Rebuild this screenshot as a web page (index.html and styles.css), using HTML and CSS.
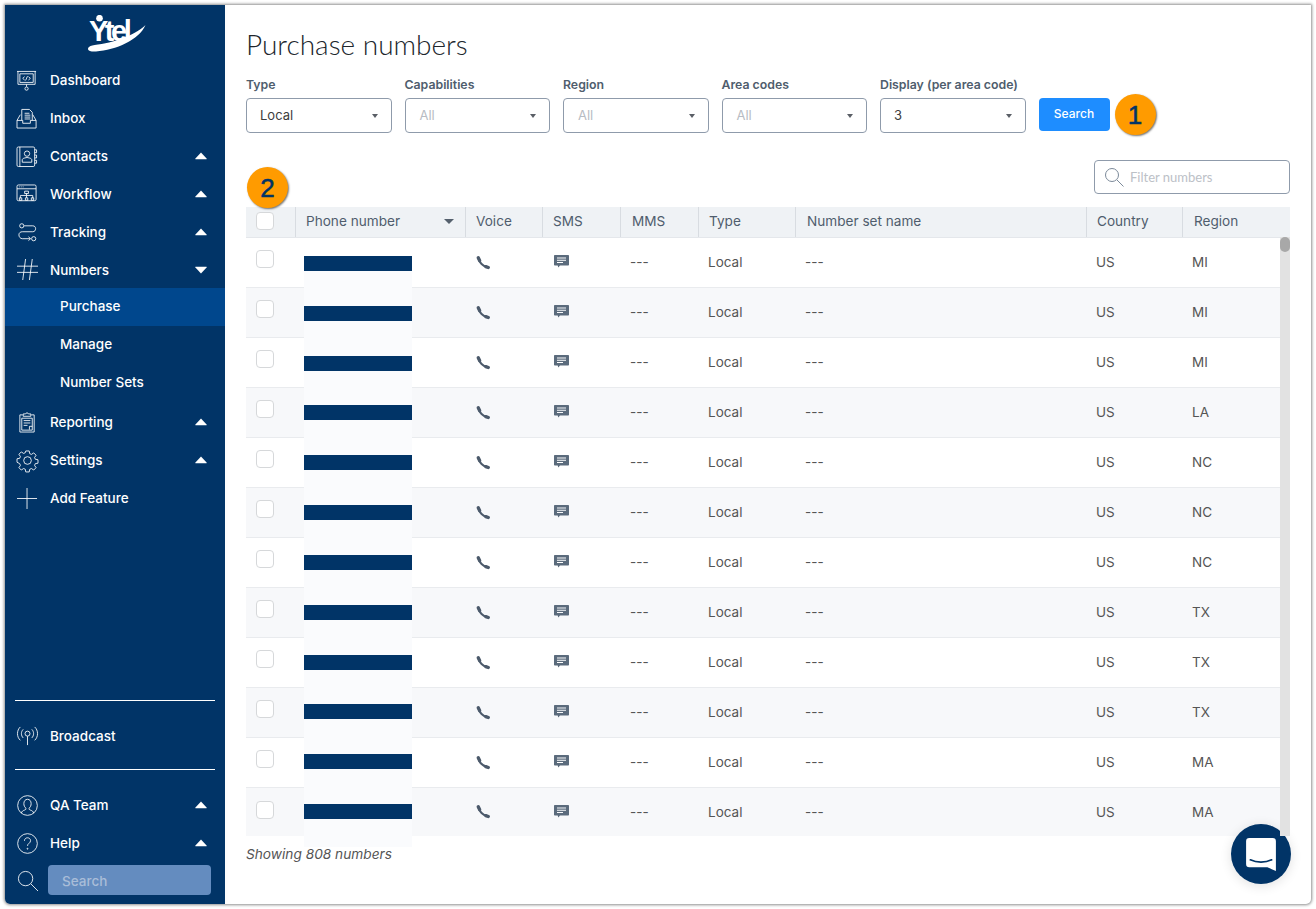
FILE: index.html
```html
<!DOCTYPE html>
<html lang="en">
<head>
<meta charset="utf-8">
<title>Purchase numbers</title>
<link rel="stylesheet" href="styles.css">
</head>
<body>
<svg class="defs" width="0" height="0" aria-hidden="true">
  <symbol id="up" viewBox="0 0 12 8"><path d="M6 .6 11.6 6.4c.3.4.1.8-.4.8H.8c-.5 0-.7-.4-.4-.8z"/></symbol>
  <symbol id="phone" viewBox="0 0 14 14"><path d="M2.600 3C3.500 6.500 7 10 11 11" fill="none" stroke="#4c5a6b" stroke-width="2.300"/><path d="M2.300 1.800 3.600 4.500M9.800 10.600l2.500.9" fill="none" stroke="#4c5a6b" stroke-width="3.300" stroke-linecap="round"/></symbol>
  <symbol id="sms" viewBox="0 0 15 13"><path fill-rule="evenodd" d="M.8 0h13.400a.8.8 0 0 1 .8.8V9.700a.8.800 0 0 1-.8.8H6l-1.700 2-.6-2H.8a.8.800 0 0 1-.8-.8V.8A.8.800 0 0 1 .8 0zM3 2.500v.9h9v-.9zm0 2.300v.9h9v-.9zm0 2.300V8h6V7.100z"/></symbol>
</svg>
<div class="window">
  <nav class="sidebar">
    <div class="logo">
      <span class="logo-text">Ytel</span>
      <svg class="logo-swoosh" width="60" height="38" viewBox="0 0 60 38"><circle cx="11.500" cy="3.200" r="3.300" fill="#fff"/><path d="M1 32C-2 35 2 37 8 36.500 28 35 51 25 57.500 10 50 18 30 27 10 29.500 5 30.300 3 30.500 1 32z" fill="#fff"/></svg>
    </div>
    <a class="nav-item"><svg class="ico" viewBox="1 0 22 22"><path d="M1 1.500h20M2 1.500v13.500h18V1.500M11 15v2.500"/><circle cx="11" cy="19.500" r="1.700"/><path d="M4 4h14v9H4zM9 7 7 8.800l2 1.700M13 7l2 1.800-2 1.700M12 6.500l-2 4.500"/></svg><span>Dashboard</span></a>
    <a class="nav-item"><svg class="ico" viewBox="1 0 22 22"><path d="M1 13v8h20v-8l-3.500-6M1 13l3.500-6M1 13h6v3h8v-3h6"/><path d="M6 13V1.500h8l3 3V13M9 5.500h5M9 7.500h6M9 9.500h6M9 11.500h6"/></svg><span>Inbox</span></a>
    <a class="nav-item"><svg class="ico" viewBox="1 0 22 22"><rect x="1" y="1" width="18.500" height="20.500" rx="1.500"/><path d="M4 1v20.500M19.500 4h2v3h-2M19.500 9.500h2v3h-2M19.500 15h2v3h-2"/><circle cx="11.500" cy="8" r="2.800"/><path d="M6.500 17v-2.500c0-1 1-1.500 2-1.800l3-.7 3 .7c1 .3 2 .8 2 1.800V17z"/></svg><span>Contacts</span><svg class="caret"><use href="#up"/></svg></a>
    <a class="nav-item"><svg class="ico" viewBox="1 0 22 22"><rect x="1" y="1" width="20" height="16.500" rx="1.500"/><path d="M1 5h20M3 3h.8M5 3h.8M7 3h.8M9 7.500h4v2.500H9zM11 10v2M4.500 15v-3h13v3M3.500 14.500h2.500v2.500H3.500zM9.800 14.500h2.500v2.500H9.800zM16 14.500h2.500v2.500H16zM11 12v2.500"/></svg><span>Workflow</span><svg class="caret"><use href="#up"/></svg></a>
    <a class="nav-item"><svg class="ico" viewBox="0 0 22 22"><circle cx="5" cy="4" r="2.200"/><circle cx="17.500" cy="17.500" r="2.200"/><path d="M7.500 4h9c2 0 3 1.400 3 3s-1 3.200-3 3.200H5.500c-2 0-3.500 1.300-3.500 3.300s1.500 4 3.500 4H14M12 15.500l2.200 2-2.200 2"/></svg><span>Tracking</span><svg class="caret"><use href="#up"/></svg></a>
    <a class="nav-item nav-open"><svg class="ico" viewBox="0 0 22 22"><path d="M0 7.500h22M0 14h22M9 0 6 22M16 0l-3 22"/></svg><span>Numbers</span><svg class="caret caret-down"><use href="#up"/></svg></a>
    <div class="submenu">
      <a class="sub-item sub-active">Purchase</a>
      <a class="sub-item">Manage</a>
      <a class="sub-item">Number Sets</a>
    </div>
    <a class="nav-item"><svg class="ico" viewBox="0 0 22 22"><path d="M6 3H3v18h15V3h-3"/><path d="M6.500 4.500V2h2.500c0-1.400 3-1.400 3 0h2.500v2.500zM5 6.500h11v12.500H5zM7 9h7M7 11.500h7M7 14h4M13 18.500V15h3"/></svg><span>Reporting</span><svg class="caret"><use href="#up"/></svg></a>
    <a class="nav-item"><svg class="ico" viewBox="0 0 22 22"><circle cx="11" cy="11" r="4"/><path d="M9.200 1h3.600l.5 2.800 1.800.8 2.400-1.600 2.500 2.500-1.600 2.400.8 1.800 2.800.5v3.600l-2.800.5-.8 1.800 1.600 2.400-2.500 2.500-2.400-1.600-1.800.8-.5 2.800H9.200l-.5-2.800-1.800-.8-2.400 1.600-2.500-2.500 1.600-2.400-.8-1.800L0 12.800V9.200l2.800-.5.800-1.800L2 4.500 4.500 2l2.400 1.600 1.800-.8z"/></svg><span>Settings</span><svg class="caret"><use href="#up"/></svg></a>
    <a class="nav-item"><svg class="ico" viewBox="0 0 22 22"><path d="M0 11h21M10.500 0v22"/></svg><span>Add Feature</span></a>

    <div class="side-bottom">
      <div class="side-rule"></div>
      <a class="nav-item nav-broadcast"><svg class="ico" viewBox="0 0 22 22"><circle cx="11" cy="8" r="2.600"/><path d="M11 10.600V20M6.500 3.500c-2.500 2.500-2.500 6.500 0 9M15.500 3.500c2.500 2.500 2.500 6.500 0 9M3.500 1c-4 3.500-4 10.500 0 14M18.500 1c4 3.500 4 10.500 0 14"/></svg><span>Broadcast</span></a>
      <div class="side-rule"></div>
      <a class="nav-item nav-team"><svg class="ico" viewBox="0 0 22 22"><circle cx="11" cy="11" r="10.300"/><path d="M4.500 19c.5-2 2-2.700 3.500-3.200 1-.4 1.500-.8 1.500-1.800-1.500-1-2.300-3-2.300-5 0-2.700 1.500-4.500 3.800-4.500s3.800 1.800 3.800 4.500c0 2-.8 4-2.300 5 0 1 .5 1.400 1.500 1.800 1.500.5 3 1.200 3.500 3.200"/></svg><span>QA Team</span><svg class="caret"><use href="#up"/></svg></a>
      <a class="nav-item"><svg class="ico" viewBox="0 0 22 22"><circle cx="11" cy="11" r="10.300"/><path d="M7.800 8.200c0-2 1.500-3.200 3.200-3.200s3.200 1.200 3.200 3c0 2.800-3.200 2.800-3.200 5.500"/><circle cx="11" cy="16.500" r=".5"/></svg><span>Help</span><svg class="caret"><use href="#up"/></svg></a>
      <div class="side-search">
        <svg class="ico" viewBox="0 0 22 22"><circle cx="9" cy="9" r="7.500"/><path d="m14.500 14.500 7.500 7.500"/></svg>
        <div class="side-search-box">Search</div>
      </div>
    </div>
  </nav>

  <main class="content">
    <h1 class="title">Purchase numbers</h1>
    <form class="filters">
      <div class="field"><label>Type</label><div class="select"><span>Local</span><i class="sel-caret"></i></div></div>
      <div class="field"><label>Capabilities</label><div class="select muted"><span>All</span><i class="sel-caret"></i></div></div>
      <div class="field"><label>Region</label><div class="select muted"><span>All</span><i class="sel-caret"></i></div></div>
      <div class="field"><label>Area codes</label><div class="select muted"><span>All</span><i class="sel-caret"></i></div></div>
      <div class="field"><label>Display (per area code)</label><div class="select"><span>3</span><i class="sel-caret"></i></div></div>
      <button class="search-btn" type="button">Search</button>
      <span class="badge">1</span>
    </form>

    <div class="filter-row">
      <div class="filter-box">
        <svg width="22" height="22" viewBox="0 0 22 22" fill="none" stroke="#7c8a9a"><circle cx="9" cy="9" r="6.500"/><path d="m14 14 6.500 6.500"/></svg>
        <span>Filter numbers</span>
      </div>
    </div>

    <div class="table-wrap">
      <span class="badge badge-two">2</span>
      <div class="row head">
        <div class="cell"><i class="check"></i></div>
        <div class="cell">Phone number<i class="sort-caret"></i></div>
        <div class="cell">Voice</div>
        <div class="cell">SMS</div>
        <div class="cell">MMS</div>
        <div class="cell">Type</div>
        <div class="cell">Number set name</div>
        <div class="cell">Country</div>
        <div class="cell">Region</div>
      </div>
      <div class="row"><div class="cell"><i class="check"></i></div><div class="cell"></div><div class="cell"><svg class="ph"><use href="#phone"/></svg></div><div class="cell"><svg class="msg"><use href="#sms"/></svg></div><div class="cell">---</div><div class="cell">Local</div><div class="cell">---</div><div class="cell">US</div><div class="cell">MI</div></div>
      <div class="row"><div class="cell"><i class="check"></i></div><div class="cell"></div><div class="cell"><svg class="ph"><use href="#phone"/></svg></div><div class="cell"><svg class="msg"><use href="#sms"/></svg></div><div class="cell">---</div><div class="cell">Local</div><div class="cell">---</div><div class="cell">US</div><div class="cell">MI</div></div>
      <div class="row"><div class="cell"><i class="check"></i></div><div class="cell"></div><div class="cell"><svg class="ph"><use href="#phone"/></svg></div><div class="cell"><svg class="msg"><use href="#sms"/></svg></div><div class="cell">---</div><div class="cell">Local</div><div class="cell">---</div><div class="cell">US</div><div class="cell">MI</div></div>
      <div class="row"><div class="cell"><i class="check"></i></div><div class="cell"></div><div class="cell"><svg class="ph"><use href="#phone"/></svg></div><div class="cell"><svg class="msg"><use href="#sms"/></svg></div><div class="cell">---</div><div class="cell">Local</div><div class="cell">---</div><div class="cell">US</div><div class="cell">LA</div></div>
      <div class="row"><div class="cell"><i class="check"></i></div><div class="cell"></div><div class="cell"><svg class="ph"><use href="#phone"/></svg></div><div class="cell"><svg class="msg"><use href="#sms"/></svg></div><div class="cell">---</div><div class="cell">Local</div><div class="cell">---</div><div class="cell">US</div><div class="cell">NC</div></div>
      <div class="row"><div class="cell"><i class="check"></i></div><div class="cell"></div><div class="cell"><svg class="ph"><use href="#phone"/></svg></div><div class="cell"><svg class="msg"><use href="#sms"/></svg></div><div class="cell">---</div><div class="cell">Local</div><div class="cell">---</div><div class="cell">US</div><div class="cell">NC</div></div>
      <div class="row"><div class="cell"><i class="check"></i></div><div class="cell"></div><div class="cell"><svg class="ph"><use href="#phone"/></svg></div><div class="cell"><svg class="msg"><use href="#sms"/></svg></div><div class="cell">---</div><div class="cell">Local</div><div class="cell">---</div><div class="cell">US</div><div class="cell">NC</div></div>
      <div class="row"><div class="cell"><i class="check"></i></div><div class="cell"></div><div class="cell"><svg class="ph"><use href="#phone"/></svg></div><div class="cell"><svg class="msg"><use href="#sms"/></svg></div><div class="cell">---</div><div class="cell">Local</div><div class="cell">---</div><div class="cell">US</div><div class="cell">TX</div></div>
      <div class="row"><div class="cell"><i class="check"></i></div><div class="cell"></div><div class="cell"><svg class="ph"><use href="#phone"/></svg></div><div class="cell"><svg class="msg"><use href="#sms"/></svg></div><div class="cell">---</div><div class="cell">Local</div><div class="cell">---</div><div class="cell">US</div><div class="cell">TX</div></div>
      <div class="row"><div class="cell"><i class="check"></i></div><div class="cell"></div><div class="cell"><svg class="ph"><use href="#phone"/></svg></div><div class="cell"><svg class="msg"><use href="#sms"/></svg></div><div class="cell">---</div><div class="cell">Local</div><div class="cell">---</div><div class="cell">US</div><div class="cell">TX</div></div>
      <div class="row"><div class="cell"><i class="check"></i></div><div class="cell"></div><div class="cell"><svg class="ph"><use href="#phone"/></svg></div><div class="cell"><svg class="msg"><use href="#sms"/></svg></div><div class="cell">---</div><div class="cell">Local</div><div class="cell">---</div><div class="cell">US</div><div class="cell">MA</div></div>
      <div class="row row-last"><div class="cell"><i class="check"></i></div><div class="cell"></div><div class="cell"><svg class="ph"><use href="#phone"/></svg></div><div class="cell"><svg class="msg"><use href="#sms"/></svg></div><div class="cell">---</div><div class="cell">Local</div><div class="cell">---</div><div class="cell">US</div><div class="cell">MA</div></div>

      <div class="redact">
        <i></i><i></i><i></i><i></i><i></i><i></i><i></i><i></i><i></i><i></i><i></i><i></i>
      </div>
      <div class="scroll-track"><div class="scroll-thumb"></div></div>
    </div>
    <p class="showing">Showing 808 numbers</p>
  </main>

  <div class="chat">
    <svg width="30" height="33" viewBox="0 0 28 31"><path d="M3 0h22a3 3 0 0 1 3 3v28l-8-3.500H3a3 3 0 0 1-3-3V3a3 3 0 0 1 3-3z" fill="#fff"/><path d="M4 20.500c6 3 14 3 20 0" fill="none" stroke="#013467" stroke-width="1.600" stroke-linecap="round"/></svg>
  </div>
</div>
</body>
</html>
```
FILE: styles.css
```css
* { box-sizing: border-box; }
html, body { margin: 0; height: 100%; background: #fff; overflow: hidden; }
body { padding: 5px; font-family: Inter, "Liberation Sans", sans-serif; font-size: 14px; }
.defs { position: absolute; }

.window {
  position: relative;
  display: flex;
  width: 1306px;
  height: 899px;
  border-radius: 0 0 5px 5px;
  box-shadow: 0 0 3px 1px rgba(0, 0, 0, .45);
  background: #fff;
  overflow: hidden;
}

/* Sidebar */
.sidebar {
  flex: 0 0 220px;
  display: flex;
  flex-direction: column;
  background: #013467;
  color: #fff;
}
.logo { position: relative; height: 56px; }
.logo-swoosh { position: absolute; left: 83px; top: 10px; }
.logo-text {
  position: absolute;
  left: 84px;
  top: 9px;
  font: 700 29px/34px "Liberation Sans", sans-serif;
  letter-spacing: -3.500px;
  color: #fff;
}
.nav-item {
  display: flex;
  align-items: center;
  height: 38px;
  padding: 0 18px 0 12px;
  font-size: 13.500px;
  font-weight: 500;
  line-height: 20px;
  color: #fff;
}
.nav-open { height: 37px; }
.ico {
  flex: 0 0 21px;
  width: 21px;
  height: 21px;
  margin-right: 12px;
  fill: none;
  stroke: #fff;
  stroke-width: .9;
  overflow: visible;
}
.caret { width: 12px; height: 8px; margin-left: auto; fill: #fff; }
.caret-down { transform: rotate(180deg); }
.submenu { margin-bottom: 1px; }
.sub-item { display: flex; align-items: center; height: 38px; padding-left: 55px; padding-bottom: 3px; font-size: 13.500px; font-weight: 500; }
.sub-active { background: #00478d; }
.side-bottom { margin-top: auto; padding-bottom: 9px; }
.side-rule { height: 1px; margin: 0 10px; background: #fff; }
.nav-broadcast { margin: 16px 0 14px; }
.nav-team { margin-top: 16px; }
.side-search { display: flex; align-items: center; margin-top: 3px; padding: 0 14px 0 12px; }
.side-search .ico { margin-right: 10px; }
.side-search-box {
  flex: 1;
  height: 30px;
  padding-left: 14px;
  border-radius: 4px;
  background: #648cbf;
  color: #a9bdd8;
  font-weight: 500;
  font-size: 13.500px;
  line-height: 32px;
}

/* Content */
.content { flex: 1; min-width: 0; padding: 19px 21px 0; box-shadow: inset 8px 0 10px -8px rgba(0,0,0,.03); }
.title { margin: 0; height: 40px; font: 300 28px/40px Lato, sans-serif; color: #20262c; }
.filters { display: flex; align-items: flex-start; margin-top: 14px; }
.field { display: flex; flex-direction: column; margin-right: 13px; }
.field label { height: 20px; font-size: 12.300px; line-height: 14px; font-weight: 600; color: #4f5d6d; }
.select {
  display: flex;
  align-items: center;
  justify-content: space-between;
  width: 145.500px;
  height: 35px;
  padding: 0 13px 2px 13px;
  border: 1px solid #8f9bab;
  border-radius: 4px;
  font-size: 13px;
  color: #3d3d3d;
}
.muted { color: #b7bcc3; padding-left: 14px; }
.sel-caret { width: 0; height: 0; margin-top: 2px; border: 3.500px solid transparent; border-top: 4px solid #5a5f66; border-bottom: 0; }
.search-btn {
  margin-top: 20px;
  width: 71px;
  height: 33px;
  border: 0;
  border-radius: 4px;
  background: #1e8dff;
  color: #fff;
  padding: 0 0 2px;
  font: 500 12px/31px Inter, sans-serif;
}
.badge {
  display: flex;
  align-items: center;
  justify-content: center;
  width: 41px;
  height: 41px;
  margin: 16px 0 0 5px;
  border-radius: 50%;
  background: #ff9b00;
  box-shadow: 1px 1px 2px rgba(0, 0, 0, .55);
  color: #013467;
  font: 400 26px/1 "Liberation Sans", sans-serif;
  -webkit-text-stroke: .5px #013467;
}
.badge-two { position: absolute; left: 1px; top: -40px; margin: 0; z-index: 3; }

.filter-row { display: flex; justify-content: flex-end; margin-top: 25px; }
.filter-box {
  display: flex;
  align-items: center;
  width: 196px;
  height: 34px;
  padding-left: 8px;
  border: 1px solid #8f9bab;
  border-radius: 4px;
  font: 400 13px Lato, sans-serif;
  color: #bcc1c7;
}
.filter-box svg { margin-right: 5px; }

/* Table */
.table-wrap { position: relative; margin-top: 13px; }
.row {
  display: grid;
  grid-template-columns: 49px 170px 77px 78px 78px 97px 291px 96px 1fr;
  height: 50px;
  border-bottom: 1px solid #e9ebee;
  background: #fff;
  color: #555;
  font-size: 13.500px;
}
.row:nth-child(even) { background: #f7f8fa; }
.row.row-last { border-bottom: 0; height: 48px; }
.row .cell { display: flex; align-items: center; padding: 0 10px 2px; }
.row .cell:first-child { padding: 0 0 7px 9px; }
.row .cell:nth-child(3) { padding: 0 10px 0 11px; }
.row .cell:nth-child(4) { padding: 0 10px 0 12px; }
.row.row-last .cell { padding-bottom: 0; }
.row.row-last .cell:first-child { padding-bottom: 5px; }
.row.head {
  height: 31px;
  border-bottom: 1px solid #e4e7eb;
  background: #eff2f5;
  color: #4f5d6d;
  font-size: 13.600px;
}
.row.head .cell { padding: 0 10px 2px; border-left: 1px solid #d8dce1; }
.row.head .cell:first-child { border-left: 0; padding: 0 0 2px 9px; }
.row.head .cell:nth-child(2) { padding-right: 11px; }
.row.head .cell:nth-child(5),
.row.head .cell:nth-child(7),
.row.head .cell:nth-child(9) { padding-left: 11px; }
.check {
  display: block;
  width: 18px;
  height: 18px;
  margin-left: 1px;
  border: 1px solid #d6d8da;
  border-radius: 4px;
  background: #fff;
}
.sort-caret { margin-left: auto; width: 0; height: 0; border: 5.500px solid transparent; border-top: 5.500px solid #55606d; border-bottom: 0; }
.ph { width: 14px; height: 14px; }
.msg { width: 15px; height: 13px; margin-top: -2px; fill: #5b6b7c; }

.redact {
  position: absolute;
  left: 58px;
  top: 49px;
  z-index: 1;
  width: 108px;
  height: 591px;
  display: flex;
  flex-direction: column;
  background: #fafbfd;
}
.redact i { display: block; flex: 0 0 15px; height: 15px; margin-bottom: 34.820px; background: #013467; }
.scroll-track { position: absolute; right: 0; top: 30px; bottom: 0; width: 10px; background: #e2e2e2; z-index: 1; }
.scroll-thumb { width: 10px; height: 15px; border-radius: 5px; background: #a8a8a8; }
.showing { margin: 10px 0 0; font-size: 13.700px; line-height: 16px; font-style: italic; color: #555; position: relative; z-index: 2; }

.chat {
  position: absolute;
  right: 20px;
  bottom: 20px;
  width: 60px;
  height: 60px;
  display: flex;
  align-items: center;
  justify-content: center;
  border-radius: 50%;
  background: #013467;
  box-shadow: 0 2px 12px rgba(0, 0, 0, .12);
}
```
